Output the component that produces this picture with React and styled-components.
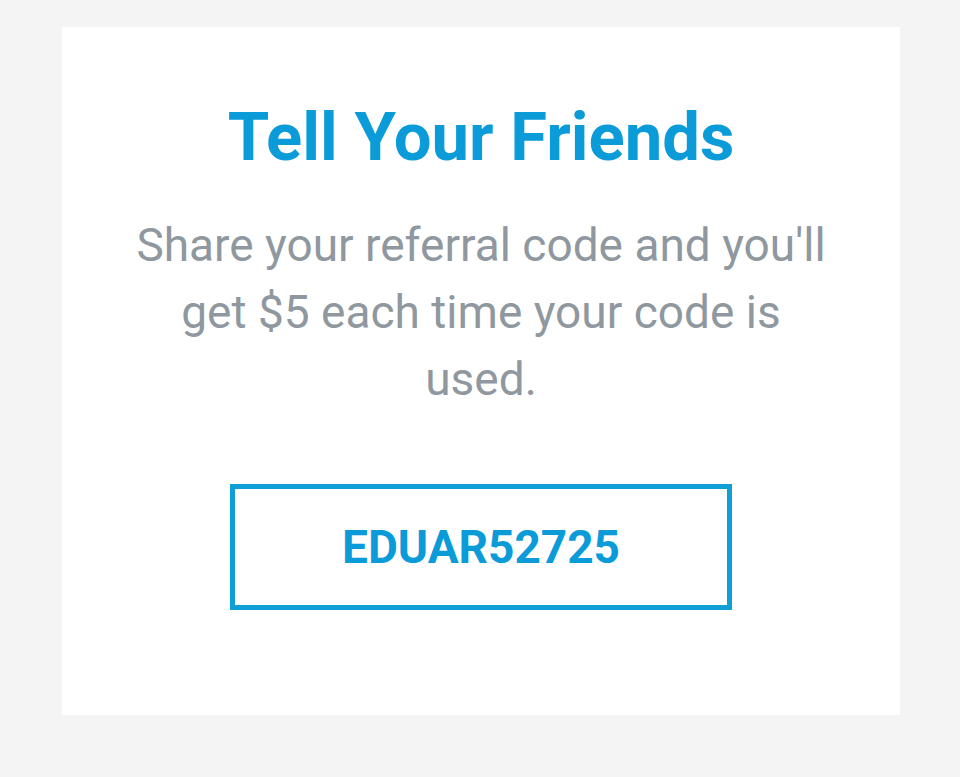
import React from "react";
import styled, { createGlobalStyle } from "styled-components";

const GlobalStyle = createGlobalStyle`
  html, body {
    margin: 0;
    padding: 0;
    background-color: #f4f4f4;
    font-family: Roboto, "Liberation Sans", sans-serif;
  }
`;

const Page = styled.div`
  padding: 27px 60px 62px 62px;
`;

const Card = styled.div`
  background-color: #ffffff;
  height: 688px;
  box-sizing: border-box;
  padding-top: 77px;
  display: flex;
  flex-direction: column;
  align-items: center;
`;

const Title = styled.h1`
  margin: 0;
  color: #0a9bd8;
  font-size: 67px;
  font-weight: 700;
  line-height: 1;
`;

const Intro = styled.p`
  margin: 41px 0 0;
  width: 720px;
  color: #8f979f;
  font-size: 46px;
  line-height: 67px;
  text-align: center;
`;

const CodeBox = styled.div`
  margin-top: 71px;
  width: 502px;
  height: 126px;
  box-sizing: border-box;
  border: 5px solid #109ed6;
  display: flex;
  align-items: center;
  justify-content: center;
  color: #0a9bd8;
  font-size: 46px;
  font-weight: 700;
`;

const App = () => {
  return (
    <Page>
      <GlobalStyle />
      <Card>
        <Title>Tell Your Friends</Title>
        <Intro>
          Share your referral code and you'll get $5 each time your code is
          used.
        </Intro>
        <CodeBox>EDUAR52725</CodeBox>
      </Card>
    </Page>
  );
};

export default App;
